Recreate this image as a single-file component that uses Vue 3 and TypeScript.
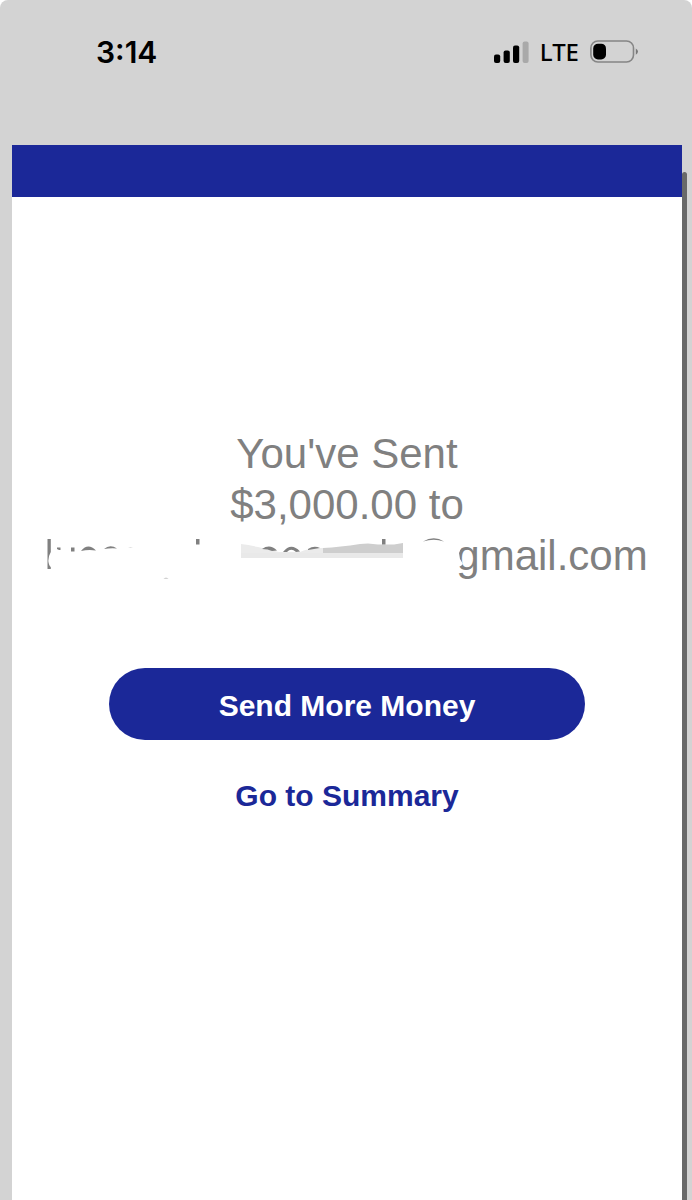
<script setup lang="ts">
const amount: string = '$3,000.00'
const emailDomain: string = 'gmail.com'
</script>

<template>
  <div class="screen">
    <header class="status">
      <time class="clock">3:14</time>
      <div class="indicators">
        <svg class="signal" width="35" height="22" viewBox="0 0 35 22" role="img" aria-label="Signal strength">
          <rect x="0" y="13.5" width="6.2" height="8.5" rx="2" />
          <rect x="9.6" y="9.5" width="6.2" height="12.5" rx="2" />
          <rect x="19" y="4.5" width="6.2" height="17.5" rx="2" />
          <rect x="28.6" y="0.5" width="6" height="21.5" rx="2" fill="#a9a9a9" />
        </svg>
        <span class="network">LTE</span>
        <svg class="battery" width="48" height="24" viewBox="0 0 48 24" role="img" aria-label="Battery low">
          <rect x="0.9" y="1" width="42.6" height="21" rx="7" fill="none" stroke="#858585" stroke-width="1.6" />
          <rect x="3.2" y="3.7" width="12.8" height="15.8" rx="4.8" />
          <path d="M45.8 8.6Q48 10 48 11.6Q48 13.4 45.8 14.7Z" fill="#777" />
        </svg>
      </div>
    </header>

    <div class="body">
      <main class="panel">
        <div class="band"></div>
        <section class="content">
          <h1 class="message">
            <span class="line">You've Sent</span>
            <span class="line">{{ amount }} to</span>
            <span class="line recipient">
              <svg class="redaction" width="410" height="51" viewBox="0 0 410 51" aria-hidden="true">
                <g fill="#808080">
                  <path d="M1.5 9H4.8V22Q2.3 26 2.3 31Q3 36 4.8 37V39H1.5Z" />
                  <path d="M11 17.5H14.5V20H13L11 19Z" />
                  <rect x="25" y="17.5" width="3.5" height="4" />
                  <path d="M35 21Q42 12.500 50 20.500Q42 19.500 35 21Z" />
                  <path d="M58 19Q64 14 71 18.500Q64 18 58 19Z" />
                  <path d="M82 17.500Q84.500 16.500 87 17.500Z" opacity="0.5" />
                  <rect x="150" y="9" width="3.5" height="5.500" />
                  <path d="M117.500 48.500Q120 47 122.500 48.500Z" opacity="0.7" />
                </g>
                <path d="M195 14Q203 15 212 17Q225 20 233 22H254Q262 18 277 18V28H195Z" fill="#ebebeb" />
                <path d="M277 18Q294 17 314 14L322 13.500L332 14.500H348L357 13V23H277Z" fill="#cecece" />
                <rect x="195" y="23" width="162" height="5" fill="#e9e9e9" />
                <g fill="#808080">
                  <path d="M216 19Q224 13.500 231 20.500L226 21Q222 19 216 19Z" />
                  <path d="M237 22Q245 12 254 21.500L250 22Q245 17.500 241 22Z" />
                  <path d="M262 19Q268 15 274 18L262 20Z" />
                  <rect x="336" y="9" width="3.5" height="5.500" />
                  <path d="M377 11.500Q388 5 398 11.500Q388 8 377 11.500Z" />
                </g>
                <path d="M405 14H412L415 18L413 23L414 29L417 34Q414 38 405 38Z" fill="#fff" />
              </svg>
              <span>{{ emailDomain }}</span>
            </span>
          </h1>
          <button class="primary" type="button">Send More Money</button>
          <a class="summary" href="#summary">Go to Summary</a>
        </section>
      </main>
      <div class="track"><div class="thumb"></div></div>
    </div>
  </div>
</template>

<style>
body {
  margin: 0;
  background: #fff;
}
</style>

<style scoped>
.screen {
  display: flex;
  flex-direction: column;
  min-height: 100vh;
  box-sizing: border-box;
  background: #d3d3d3;
  border-top-left-radius: 8px;
  border-top-right-radius: 8px;
  font-family: "Liberation Sans", Arial, sans-serif;
}
.status {
  display: flex;
  justify-content: space-between;
  align-items: center;
  height: 104px;
  margin-bottom: 41px;
  padding: 0 54px 0 96px;
  color: #000;
}
.clock {
  font: 600 30px/36px Inter, sans-serif;
}
.indicators {
  display: flex;
  align-items: center;
  gap: 11px;
}
.network {
  font: 600 24px/32px "Noto Sans", "Open Sans", sans-serif;
  font-weight: 500;
}
.body {
  flex: 1;
  display: flex;
  padding-left: 12px;
}
.panel {
  flex: 1;
  min-width: 0;
  background: #fff;
}
.band {
  height: 52px;
  background: #1b2898;
}
.content {
  display: flex;
  flex-direction: column;
  align-items: center;
  padding: 231px 0 80px;
}
.message {
  margin: 0;
  color: #808080;
  font-size: 42px;
  line-height: 51px;
  font-weight: 400;
  text-align: center;
}
.line {
  display: block;
  white-space: nowrap;
}
.recipient {
  display: flex;
  justify-content: center;
}
.redaction {
  position: relative;
  flex: none;
  overflow: visible;
}
.primary {
  width: 71%;
  height: 72px;
  margin-top: 87px;
  padding: 4px 0 0;
  border: 0;
  border-radius: 36px;
  background: #1b2898;
  color: #fff;
  font: inherit;
  font-size: 30px;
  font-weight: 700;
  cursor: pointer;
}
.summary {
  margin-top: 38px;
  color: #1b2898;
  font-size: 30px;
  line-height: 36px;
  font-weight: 700;
  text-decoration: none;
}
.track {
  display: flex;
  width: 10px;
  padding-top: 27px;
}
.thumb {
  width: 5px;
  border-radius: 3px 3px 0 0;
  background: #696969;
}
</style>
